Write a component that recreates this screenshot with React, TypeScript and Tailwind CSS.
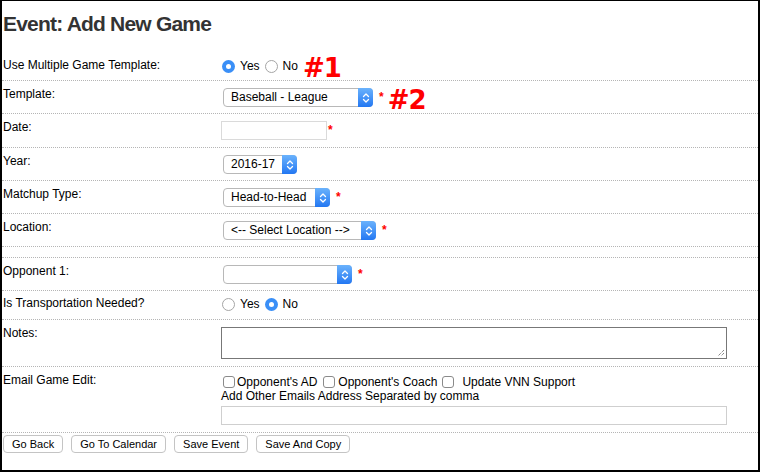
import React from 'react';

const Chevrons: React.FC = () => (
  <svg width="8" height="12" viewBox="0 0 8 12" fill="none">
    <path d="M1.5 4.5 L4 2 L6.5 4.5" stroke="white" strokeWidth="1.3" strokeLinecap="round" strokeLinejoin="round" />
    <path d="M1.5 7.5 L4 10 L6.5 7.5" stroke="white" strokeWidth="1.3" strokeLinecap="round" strokeLinejoin="round" />
  </svg>
);

const Select: React.FC<{ value?: string; width: string }> = ({ value = '', width }) => (
  <div className={`ml-[2px] flex h-[19px] shrink-0 items-stretch rounded-[4px] border border-[#b8b8b8] bg-white ${width}`}>
    <span className="flex-1 truncate pl-[7px] text-[12px] leading-[17px] text-black">{value}</span>
    <span className="-my-px -mr-px flex w-[15px] items-center justify-center rounded-r-[4px] bg-linear-to-b from-[#6ab2fc] to-[#2277f2]">
      <Chevrons />
    </span>
  </div>
);

const Req: React.FC<{ className?: string }> = ({ className = '' }) => (
  <span className={`self-start text-[12px] font-bold leading-[12px] text-[#f00] ${className}`}>*</span>
);

const Radio: React.FC<{ on?: boolean }> = ({ on }) =>
  on ? (
    <span className="flex h-[13px] w-[13px] shrink-0 items-center justify-center rounded-full bg-[#3a8ff7]">
      <span className="h-[5px] w-[5px] rounded-full bg-white" />
    </span>
  ) : (
    <span className="block h-[13px] w-[13px] shrink-0 rounded-full border border-[#a5a5a5] bg-white" />
  );

const Check: React.FC<{ className?: string }> = ({ className = '' }) => (
  <span className={`h-[12px] w-[12px] shrink-0 rounded-[3px] border border-[#8a8a8a] bg-white ${className}`} />
);

const YesNo: React.FC<{ yes: boolean }> = ({ yes }) => (
  <div className="ml-[1px] flex h-[14px] items-center gap-[5px] text-[12px] text-black">
    <Radio on={yes} />
    <span>Yes</span>
    <Radio on={!yes} />
    <span>No</span>
  </div>
);

const Row: React.FC<{ label?: string; className?: string; children?: React.ReactNode }> = ({
  label,
  className = 'pt-[7px] pb-[6px]',
  children,
}) => (
  <div className={`flex border-b border-dotted border-[#b5b5b5] ${className}`}>
    <div className="w-[219px] shrink-0 pl-[1px] text-[12px] leading-[12px] text-black">{label}</div>
    <div className="flex flex-1 items-start">{children}</div>
  </div>
);

const Badge: React.FC<{ text: string; className?: string }> = ({ text, className = '' }) => (
  <span
    className={`h-0 font-['DejaVu_Sans',sans-serif] text-[26px] font-bold leading-[20px] tracking-[-1px] text-[#f00] ${className}`}
  >
    {text}
  </span>
);

const App: React.FC = () => {
  const buttons = ['Go Back', 'Go To Calendar', 'Save Event', 'Save And Copy'];

  return (
    <div className="h-[472px] w-[760px] overflow-hidden border-t border-r-2 border-b-2 border-l-2 border-black bg-white font-['Liberation_Sans',Arial,sans-serif]">
      <h1 className="pt-[10px] pl-[1px] text-[21px] font-bold leading-[26px] tracking-[-0.8px] text-[#333]">
        Event: Add New Game
      </h1>

      <div className="mt-[15px]">
        <Row label="Use Multiple Game Template:" className="pt-[7px] pb-[7px]">
          <YesNo yes />
          <Badge text="#1" className="-mt-[1px] ml-[5px]" />
        </Row>

        <Row label="Template:">
          <Select value="Baseball - League" width="w-[150px]" />
          <Req className="ml-[6px] mt-[3px]" />
          <Badge text="#2" className="mt-[2px] ml-[4px]" />
        </Row>

        <Row label="Date:" className="pt-[7px] pb-[7px]">
          <div className="h-[19px] w-[106px] border border-[#dadada] bg-white" />
          <Req className="ml-[1px] mt-[3px]" />
        </Row>

        <Row label="Year:">
          <Select value="2016-17" width="w-[74px]" />
        </Row>

        <Row label="Matchup Type:">
          <Select value="Head-to-Head" width="w-[107px]" />
          <Req className="ml-[6px] mt-[3px]" />
        </Row>

        <Row label="Location:">
          <Select value="<-- Select Location -->" width="w-[153px]" />
          <Req className="ml-[6px] mt-[3px]" />
        </Row>

        <Row className="h-[11px]" />

        <Row label="Opponent 1:">
          <Select width="w-[129px]" />
          <Req className="ml-[6px] mt-[3px]" />
        </Row>

        <Row label="Is Transportation Needed?" className="pt-[6px] pb-[8px]">
          <YesNo yes={false} />
        </Row>

        <Row label="Notes:" className="pt-[7px] pb-[7px]">
          <div className="relative h-[32px] w-[506px] border border-[#777] bg-white">
            <svg className="absolute right-[1px] bottom-[1px]" width="9" height="9" viewBox="0 0 9 9">
              <path d="M8 2 L2 8 M8 5 L5 8" stroke="#555" strokeWidth="1" strokeDasharray="1 1" />
            </svg>
          </div>
        </Row>

        <Row label="Email Game Edit:" className="pt-[7px] pb-[7px]">
          <div className="flex flex-col">
            <div className="flex h-[15px] items-center text-[12px] text-black">
              <Check className="ml-[2px]" />
              <span className="ml-[2px]">Opponent's AD</span>
              <Check className="ml-[6px]" />
              <span className="ml-[3px]">Opponent's Coach</span>
              <Check className="ml-[5px]" />
              <span className="ml-[8px]">Update VNN Support</span>
            </div>
            <div className="h-[15px] text-[12px] leading-[15px] text-black">Add Other Emails Address Separated by comma</div>
            <div className="mt-[2px] h-[19px] w-[506px] border border-[#cfcfcf] bg-white" />
          </div>
        </Row>

        <div className="flex gap-[8px] pt-[2px] pl-[1px]">
          {buttons.map((b) => (
            <button
              key={b}
              className="h-[18px] rounded-[4px] border border-[#c4c4c4] bg-white px-[8px] text-[11px] leading-[16px] text-black"
            >
              {b}
            </button>
          ))}
        </div>
      </div>
    </div>
  );
};

export default App;
